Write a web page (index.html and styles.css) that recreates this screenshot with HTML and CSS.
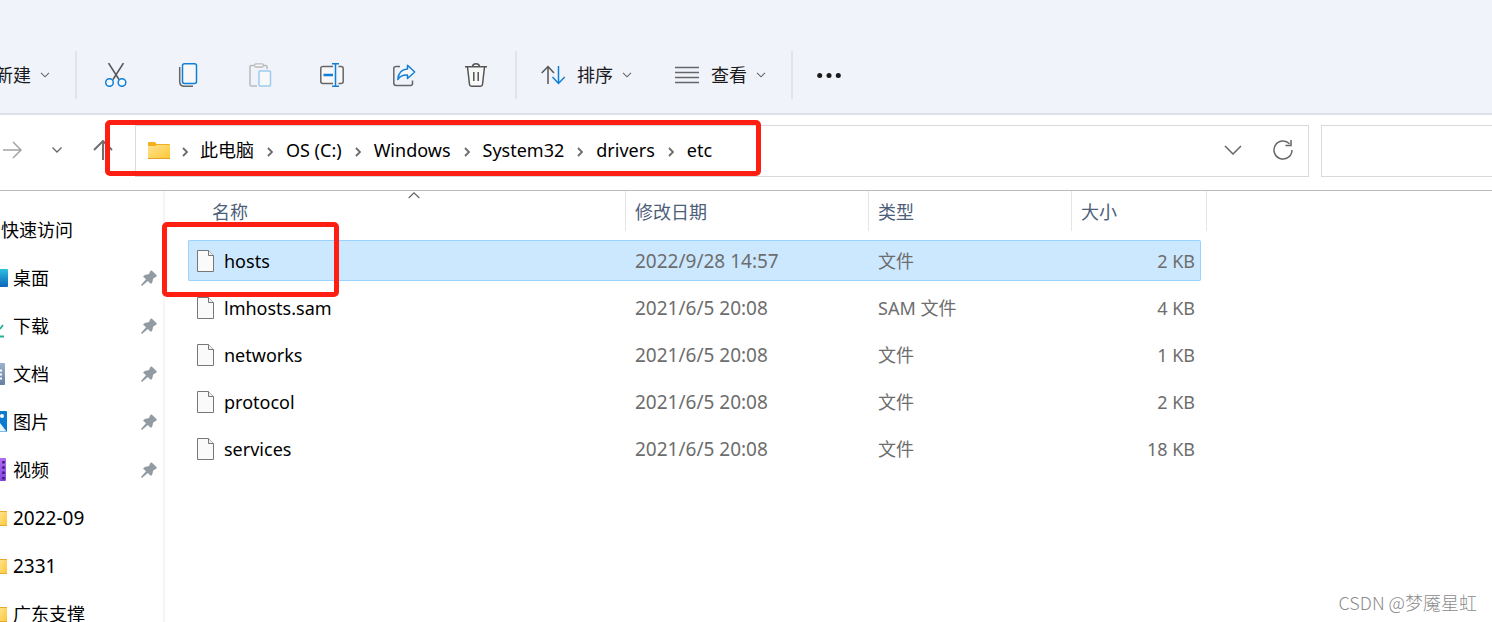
FILE: index.html
```html
<!DOCTYPE html>
<html lang="zh-CN">
<head>
<meta charset="utf-8">
<title>etc</title>
<link rel="stylesheet" href="styles.css">
</head>
<body>
<svg class="defs" aria-hidden="true">
  <symbol id="chev" viewBox="0 0 10 6"><path d="M1 .8 5 4.800 9 .8" fill="none" stroke="#666" stroke-width="1.100"/></symbol>
  <symbol id="sep" viewBox="0 0 6 10"><path d="M1 1 5 5 1 9" fill="none" stroke="#6b6b6b" stroke-width="1.8"/></symbol>
  <symbol id="pin" viewBox="0 0 16 16"><path d="M9.300 1 Q10 0 11 .8 L15.2 4.800 Q16.200 6 15.200 6.800 L12.500 8.200 11.800 9.800 Q12 12 10 14 L6.800 11 1.600 15.400 0 16 .6 14.200 5 9.300 2 6.400 Q4 4.300 6.600 4.600 L8.200 3.800Z" fill="#939ba2"/></symbol>
  <symbol id="file" viewBox="0 0 17 22"><path d="M.5 .5H11.500L16.500 5.500V21.500H.5Z" fill="#fafafa" stroke="#777"/><path d="M11.500 .5V5.500H16.500" fill="#eee" stroke="#777"/></symbol>
  <symbol id="folder" viewBox="0 0 22 17"><path d="M0 1 Q0 0 1 0H7L8.500 2H21Q22 2 22 3V8H0Z" fill="#f2b01e"/><path d="M0 4H7L9 3H22V16Q22 17 21 17H1Q0 17 0 16Z" fill="url(#fg)"/><path d="M0 16.500H22" stroke="#e3a02a"/></symbol>
  <linearGradient id="fg" x1="0" y1="0" x2="1" y2="1"><stop offset="0" stop-color="#ffe292"/><stop offset="1" stop-color="#fdc833"/></linearGradient>
  <linearGradient id="dg" x1="0" y1="0" x2="0" y2="1"><stop offset="0" stop-color="#2cc0dc"/><stop offset="1" stop-color="#0d64bd"/></linearGradient>
  <linearGradient id="tg" x1="0" y1="0" x2="0" y2="1"><stop offset="0" stop-color="#9db2cc"/><stop offset="1" stop-color="#6680a3"/></linearGradient>
  <linearGradient id="vg" x1="0" y1="0" x2="0" y2="1"><stop offset="0" stop-color="#b06cf0"/><stop offset="1" stop-color="#8546e0"/></linearGradient>
</svg>

<header class="toolbar">
  <button class="menu new"><span>新建</span><svg class="chev"><use href="#chev"/></svg></button>
  <i class="rule"></i>
  <div class="tools">
    <button aria-label="剪切"><svg viewBox="0 0 24 24" fill="none"><path d="M4.500 0 15 16.500M19.500 0 9 16.500" stroke="#555" stroke-width="1.500"/><circle cx="5.500" cy="19.500" r="3.800" stroke="#0f7fd8" stroke-width="1.500" fill="#f7f9fc"/><circle cx="18" cy="19.500" r="3.800" stroke="#0f7fd8" stroke-width="1.500" fill="#f7f9fc"/></svg></button>
    <button aria-label="复制"><svg viewBox="0 0 24 24" fill="none"><path d="M3.700 4V18.500Q3.700 23.300 8.500 23.300H17" stroke="#666" stroke-width="1.500"/><rect x="6.500" y=".8" width="14" height="19.700" rx="2" fill="#f8f8f8" stroke="#0f7fd8" stroke-width="1.500"/></svg></button>
    <button aria-label="粘贴" disabled><svg viewBox="0 0 24 24" fill="none"><path d="M7 2.500H3Q2 2.500 2 3.500V22Q2 23 3 23H9M15 2.500H18Q19 2.500 19 3.500V6" stroke="#bbb" stroke-width="1.500"/><rect x="6.500" y=".8" width="9" height="3.200" rx="1.500" fill="#f8f8f8" stroke="#bbb" stroke-width="1.300"/><rect x="11" y="8" width="11.500" height="15" rx="1" fill="#f8f8f8" stroke="#9bcbf0" stroke-width="1.500"/></svg></button>
    <button aria-label="重命名"><svg viewBox="0 0 24 24" fill="none"><path d="M13 3.500H3Q.8 3.500 .8 5.500V18.500Q.8 20.500 3 20.500H13M18.500 3.500H21Q23.200 3.500 23.200 5.500V18.500Q23.200 20.500 21 20.500H18.500" fill="#f8f8f8" stroke="#666" stroke-width="1.500"/><path d="M3.500 12H13" stroke="#0f7fd8" stroke-width="2.500"/><path d="M12 .7H19M12 23.300H19M15.500 .7V23.300" stroke="#0f7fd8" stroke-width="1.500"/></svg></button>
    <button aria-label="共享"><svg viewBox="0 0 24 24" fill="none"><path d="M8 3.500H4Q1.800 3.500 1.800 5.500V20Q1.800 22.500 4 22.500H18.500Q20.500 22.500 20.500 20.500V17.500" stroke="#666" stroke-width="1.500"/><path d="M15.500 2.200 22.700 9 15.500 15.500V12Q9 11.500 5.800 16.500 6.500 6.500 15.500 6Z" fill="#f8f8f8" stroke="#0f7fd8" stroke-width="1.500" stroke-linejoin="round"/></svg></button>
    <button aria-label="删除"><svg viewBox="0 0 24 24" fill="none" stroke="#555" stroke-width="1.500"><path d="M3.500 4 5.500 21.500Q5.700 23.200 7.500 23.200H16.500Q18.300 23.200 18.500 21.500L20.500 4" fill="#f8f8f8"/><path d="M1 3.700H23M8.500 3.500Q9 .8 12 .8T15.500 3.500M9.800 9V18M14.200 9V18"/></svg></button>
  </div>
  <i class="rule"></i>
  <button class="menu"><svg class="icon" viewBox="0 0 24 24" fill="none" stroke-width="1.500"><path d="M7 21V3.500M.7 10 7 3.500 13 10" stroke="#555"/><path d="M17.500 3V20.500M11.500 14 17.500 20.500 23.700 14" stroke="#0f7fd8"/></svg><span>排序</span><svg class="chev"><use href="#chev"/></svg></button>
  <button class="menu view"><svg class="icon" viewBox="0 0 24 24"><path d="M0 4.500H24M0 9.500H24M0 14.500H24M0 19.500H24" stroke="#666" stroke-width="1.300"/></svg><span>查看</span><svg class="chev"><use href="#chev"/></svg></button>
  <i class="rule"></i>
  <button class="more" aria-label="更多"><svg class="icon" viewBox="0 0 24 24" fill="#1a1a1a"><circle cx="2.700" cy="12.500" r="2.500"/><circle cx="12" cy="12.500" r="2.500"/><circle cx="21.300" cy="12.500" r="2.500"/></svg></button>
</header>

<nav class="location">
  <div class="history">
    <button aria-label="前进"><svg width="20" height="20" viewBox="0 0 20 20" fill="none" stroke="#a3a3a3" stroke-width="1.500"><path d="M0 10H18M10 2 18 10 10 18"/></svg></button>
    <button aria-label="最近位置"><svg width="10" height="6" viewBox="0 0 10 6" fill="none" stroke="#666" stroke-width="1.300"><path d="M.5 .5 5 5 9.500 .5"/></svg></button>
    <button aria-label="向上"><svg width="20" height="20" viewBox="0 0 20 20" fill="none" stroke="#707070" stroke-width="2"><path d="M10 20V1M1 10 10 1 19 10"/></svg></button>
  </div>
  <div class="address">
    <svg class="folder"><use href="#folder"/></svg>
    <ol class="crumbs">
      <li><svg><use href="#sep"/></svg><a href="#">此电脑</a></li>
      <li><svg><use href="#sep"/></svg><a href="#">OS (C:)</a></li>
      <li><svg><use href="#sep"/></svg><a href="#">Windows</a></li>
      <li><svg><use href="#sep"/></svg><a href="#">System32</a></li>
      <li><svg><use href="#sep"/></svg><a href="#">drivers</a></li>
      <li><svg><use href="#sep"/></svg><a href="#">etc</a></li>
    </ol>
    <button aria-label="展开"><svg width="18" height="10" viewBox="0 0 18 10" fill="none" stroke="#666" stroke-width="1.500"><path d="M1 1 9 9 17 1"/></svg></button>
    <button aria-label="刷新"><svg width="20" height="20" viewBox="0 0 20 20" fill="none" stroke="#666" stroke-width="1.500"><path d="M19 10A9 9 0 1 1 16.500 3.800M18 0V5.500H12.500"/></svg></button>
  </div>
  <input class="search" type="text" aria-label="搜索">
  <span class="mark mark-path"></span>
</nav>

<main class="body">
  <aside class="side">
    <ul>
      <li class="root"><a href="#">快速访问</a></li>
      <li><svg class="ico" viewBox="0 0 8 24"><path d="M0 3H7Q8 3 8 4V20Q8 21 7 21H0Z" fill="url(#dg)"/></svg><a href="#">桌面</a><svg class="pin"><use href="#pin"/></svg></li>
      <li><svg class="ico" viewBox="0 0 8 24"><path d="M0 15 3 11M0 22.500H4" stroke="#22b093" stroke-width="1.800"/></svg><a href="#">下载</a><svg class="pin"><use href="#pin"/></svg></li>
      <li><svg class="ico" viewBox="0 0 8 24"><path d="M0 1H4Q5 1 5 2V22Q5 23 4 23H0Z" fill="url(#tg)"/><path d="M0 8.500H2M0 12.500H2M0 16.500H2" stroke="#fff" stroke-width="2"/></svg><a href="#">文档</a><svg class="pin"><use href="#pin"/></svg></li>
      <li><svg class="ico" viewBox="0 0 8 24"><path d="M0 1H6Q7 1 7 2V21Q7 22 6 22H0Z" fill="#0b7bd0"/><path d="M0 13 6.500 21.500H0Z" fill="#e9f5fd"/><circle cx="2" cy="6" r="2" fill="#fff"/></svg><a href="#">图片</a><svg class="pin"><use href="#pin"/></svg></li>
      <li><svg class="ico" viewBox="0 0 8 24"><path d="M0 0H5Q6 0 6 1V22Q6 23 5 23H0Z" fill="url(#vg)"/><path d="M3.500 3V22" stroke="#3d1b78" stroke-width="2.500" stroke-dasharray="2.500 2.800"/></svg><a href="#">视频</a><svg class="pin"><use href="#pin"/></svg></li>
      <li class="dir"><svg class="ico" viewBox="0 0 8 24"><path d="M0 5H7V19H0Z" fill="url(#fg)"/><path d="M0 5.500H7M0 19.500H7" stroke="#eaa92b"/></svg><a href="#">2022-09</a></li>
      <li class="dir"><svg class="ico" viewBox="0 0 8 24"><path d="M0 5H7V19H0Z" fill="url(#fg)"/><path d="M0 5.500H7M0 19.500H7" stroke="#eaa92b"/></svg><a href="#">2331</a></li>
      <li><svg class="ico" viewBox="0 0 8 24"><path d="M0 5H7V19H0Z" fill="url(#fg)"/><path d="M0 5.500H7M0 19.500H7" stroke="#eaa92b"/></svg><a href="#">广东支撑</a></li>
    </ul>
  </aside>
  <section class="files">
    <table>
      <colgroup><col class="c-name"><col class="c-date"><col class="c-type"><col class="c-size"></colgroup>
      <thead>
        <tr>
          <th><div class="head">名称<svg class="sort" viewBox="0 0 12 7"><path d="M.7 6 6 .9 11.300 6" fill="none" stroke="#666" stroke-width="1.200"/></svg></div></th>
          <th><div class="head">修改日期</div></th>
          <th><div class="head">类型</div></th>
          <th><div class="head">大小</div></th>
        </tr>
      </thead>
      <tbody>
        <tr class="selected"><td><div class="cell"><svg class="file"><use href="#file"/></svg>hosts</div></td><td><div class="cell date">2022/9/28 14:57</div></td><td><div class="cell">文件</div></td><td><div class="cell size">2 KB</div></td></tr>
        <tr><td><div class="cell"><svg class="file"><use href="#file"/></svg>lmhosts.sam</div></td><td><div class="cell date">2021/6/5 20:08</div></td><td><div class="cell">SAM 文件</div></td><td><div class="cell size">4 KB</div></td></tr>
        <tr><td><div class="cell"><svg class="file"><use href="#file"/></svg>networks</div></td><td><div class="cell date">2021/6/5 20:08</div></td><td><div class="cell">文件</div></td><td><div class="cell size">1 KB</div></td></tr>
        <tr><td><div class="cell"><svg class="file"><use href="#file"/></svg>protocol</div></td><td><div class="cell date">2021/6/5 20:08</div></td><td><div class="cell">文件</div></td><td><div class="cell size">2 KB</div></td></tr>
        <tr><td><div class="cell"><svg class="file"><use href="#file"/></svg>services</div></td><td><div class="cell date">2021/6/5 20:08</div></td><td><div class="cell">文件</div></td><td><div class="cell size">18 KB</div></td></tr>
      </tbody>
    </table>
  </section>
  <span class="mark mark-file"></span>
  <p class="watermark">CSDN @梦魇星虹</p>
</main>
</body>
</html>
```
FILE: styles.css
```css
* { box-sizing: border-box; }
body {
  margin: 0;
  height: 100vh;
  overflow: hidden;
  display: flex;
  flex-direction: column;
  background: #fff;
  color: #000;
  font: 18px/24px "Noto Sans", "Noto Sans CJK SC", sans-serif;
}
.defs { position: absolute; width: 0; height: 0; }
button {
  border: 0;
  padding: 0;
  background: none;
  font: inherit;
  color: inherit;
  display: flex;
  align-items: center;
  justify-content: center;
}
a { color: inherit; text-decoration: none; white-space: nowrap; }
ul, ol { list-style: none; margin: 0; padding: 0; }
svg { flex: none; display: block; }

.toolbar {
  display: flex;
  align-items: center;
  padding: 51px 0 14px;
  background: #f0f3fa;
  border-bottom: 2px solid #dce0e7;
  color: #1a1a1a;
}
.rule { width: 2px; height: 48px; background: #e1e4e9; }
.tools { display: flex; padding: 0 3px; }
.tools button { width: 72px; height: 48px; }
.tools svg, .icon { width: 24px; height: 24px; }
.menu { height: 48px; padding: 0 21px 0 24px; white-space: nowrap; }
.menu span { margin: 0 9px 0 12px; }
.menu.new { padding: 0 25px 0 0; margin-left: -5px; }
.menu.new span { margin-left: 0; }
.menu.view { padding: 0 25px 0 22px; }
.chev { width: 10px; height: 6px; }
.more { width: 72px; height: 48px; }

.location {
  position: relative;
  display: flex;
  padding: 10px 0 13px;
  border-bottom: 1px solid #bababa;
}
.history { display: flex; align-items: center; width: 135px; padding: 0 0 2px 3px; gap: 29px; }
.history button:last-child { margin-left: 2px; }
.address {
  flex: 1;
  height: 52px;
  display: flex;
  align-items: center;
  padding: 0 15px 2px 12px;
  border: 1px solid #d9d9d9;
}
.address button { margin-left: 31px; }
.folder { width: 22px; height: 17px; }
.crumbs { flex: 1; display: flex; align-items: center; }
.crumbs li { display: flex; align-items: center; }
.crumbs svg { width: 6px; height: 10px; margin: 3px 13px 0; }
.crumbs li:first-child svg { margin: 3px 12px 0; }
.search {
  width: 171px;
  margin-left: 12px;
  border: 1px solid #d9d9d9;
  border-right: 0;
  background: #fff;
  font: inherit;
}

.body { position: relative; flex: 1; min-height: 0; display: flex; overflow: hidden; }
.side { width: 165px; padding-top: 15px; border-right: 2px solid #f5f5f5; }
.side li { height: 48px; display: flex; align-items: center; padding-right: 6px; }
.side a { flex: 1; margin-left: 5px; }
.side .root a { margin-left: 1px; }
.side .dir a { font-size: 19px; }
.ico { width: 8px; height: 24px; }
.pin { width: 16px; height: 16px; }

.files { flex: 1; padding-left: 23px; }
table { width: 1019px; border-collapse: collapse; table-layout: fixed; }
.c-name { width: 438px; }
.c-date { width: 243px; }
.c-type { width: 203px; }
th, td { padding: 0; font-weight: 400; text-align: left; }
th { padding-bottom: 6px; }
td { height: 47px; color: #6d6d6d; }
td:first-child { color: #000; }
.head {
  position: relative;
  height: 40px;
  padding: 9px 0 0 9px;
  border-right: 1px solid #e5e5e5;
  color: #4c607a;
}
th:first-child .head { padding-left: 24px; }
.sort { position: absolute; width: 12px; height: 7px; top: 1px; left: 220px; }
.cell { height: 41px; display: flex; align-items: center; padding-left: 9px; }
.date { font-size: 19px; }
.size { justify-content: flex-end; margin-right: 6px; padding-right: 6px; }
.file { width: 17px; height: 22px; margin-right: 10px; }
.selected .cell { background: #cce8ff; border: solid #99d1ff; border-width: 1px 0; }
.selected td:first-child .cell { border-left-width: 1px; padding-left: 8px; border-radius: 2px 0 0 2px; }
.selected .size { border-right-width: 1px; padding-right: 5px; border-radius: 0 2px 2px 0; }

.mark { position: absolute; border: 5px solid #ff1f12; border-radius: 5px; pointer-events: none; }
.mark-path { left: 105px; top: 5px; width: 656px; height: 56px; }
.mark-file { left: 162px; top: 31px; width: 177px; height: 75px; }
.watermark {
  position: absolute;
  right: 15px;
  bottom: 8px;
  margin: 0;
  color: #8c8c8c;
  font-family: "Noto Sans CJK SC", sans-serif;
  font-weight: 300;
}
```
